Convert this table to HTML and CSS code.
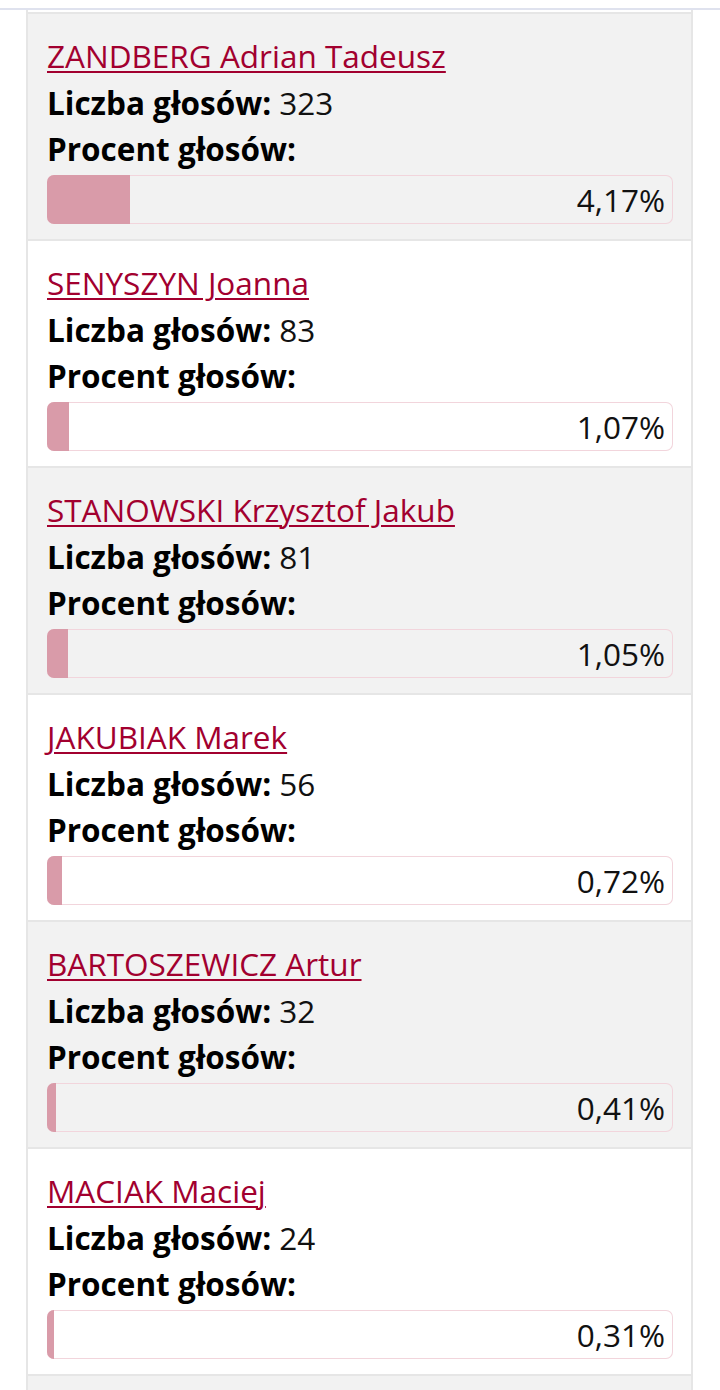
FILE: index.html
```html
<!DOCTYPE html>
<html lang="pl">
<head>
<meta charset="utf-8">
<title>Wyniki</title>
<link rel="stylesheet" href="styles.css">
</head>
<body>
<div class="topbar"></div>
<div class="results">
  <div class="card card-gray">
    <a class="name" href="#">ZANDBERG Adrian Tadeusz</a>
    <div class="row"><b>Liczba głosów:</b> 323</div>
    <div class="row"><b>Procent głosów:</b></div>
    <div class="bar"><span class="fill" style="width:13.26%"></span><span class="pct">4,17%</span></div>
  </div>
  <div class="card">
    <a class="name" href="#">SENYSZYN Joanna</a>
    <div class="row"><b>Liczba głosów:</b> 83</div>
    <div class="row"><b>Procent głosów:</b></div>
    <div class="bar"><span class="fill" style="width:3.51%"></span><span class="pct">1,07%</span></div>
  </div>
  <div class="card card-gray">
    <a class="name" href="#">STANOWSKI Krzysztof Jakub</a>
    <div class="row"><b>Liczba głosów:</b> 81</div>
    <div class="row"><b>Procent głosów:</b></div>
    <div class="bar"><span class="fill" style="width:3.4%"></span><span class="pct">1,05%</span></div>
  </div>
  <div class="card">
    <a class="name" href="#">JAKUBIAK Marek</a>
    <div class="row"><b>Liczba głosów:</b> 56</div>
    <div class="row"><b>Procent głosów:</b></div>
    <div class="bar"><span class="fill" style="width:2.4%"></span><span class="pct">0,72%</span></div>
  </div>
  <div class="card card-gray">
    <a class="name" href="#">BARTOSZEWICZ Artur</a>
    <div class="row"><b>Liczba głosów:</b> 32</div>
    <div class="row"><b>Procent głosów:</b></div>
    <div class="bar"><span class="fill" style="width:1.44%"></span><span class="pct">0,41%</span></div>
  </div>
  <div class="card">
    <a class="name" href="#">MACIAK Maciej</a>
    <div class="row"><b>Liczba głosów:</b> 24</div>
    <div class="row"><b>Procent głosów:</b></div>
    <div class="bar"><span class="fill" style="width:1.12%"></span><span class="pct">0,31%</span></div>
  </div>
  <div class="card card-gray card-stub"></div>
</div>
</body>
</html>
```
FILE: styles.css
```css
html, body {
  margin: 0;
  padding: 0;
  background: #ffffff;
  height: 1390px;
  overflow: hidden;
}
body {
  font-family: "Open Sans", "Noto Sans", sans-serif;
  color: #111111;
  font-size: 31.5px;
}
.topbar {
  height: 8px;
  border-bottom: 2px solid #dfe2ee;
}
.results {
  margin: 0 27px 0 26px;
  border-left: 2px solid #e6e6e6;
  border-right: 2px solid #e6e6e6;
  padding-top: 2px;
}
.card {
  border-top: 2px solid #e6e6e6;
  padding: 19px 18px 15px 19px;
  background: #ffffff;
  display: flex;
  flex-direction: column;
}
.card-gray {
  background: #f2f2f2;
}
.card-stub {
  height: 40px;
  padding: 0;
}
.name {
  color: #a2002f;
  text-decoration: underline;
  text-decoration-thickness: 2px;
  text-underline-offset: 3px;
  line-height: 46px;
  margin-bottom: 1px;
  align-self: flex-start;
}
.row {
  line-height: 46px;
  color: #111111;
}
.row b {
  font-weight: 700;
  color: #000000;
}
.bar {
  margin-top: 3px;
  height: 49px;
  flex: none;
  border-radius: 7px;
  box-shadow: inset 0 0 0 1px #f2d5dc;
  overflow: hidden;
  display: flex;
  align-items: center;
}
.fill {
  align-self: stretch;
  background: #d99ba9;
  flex: none;
}
.pct {
  margin-left: auto;
  padding-right: 8px;
  line-height: 46px;
}
```
